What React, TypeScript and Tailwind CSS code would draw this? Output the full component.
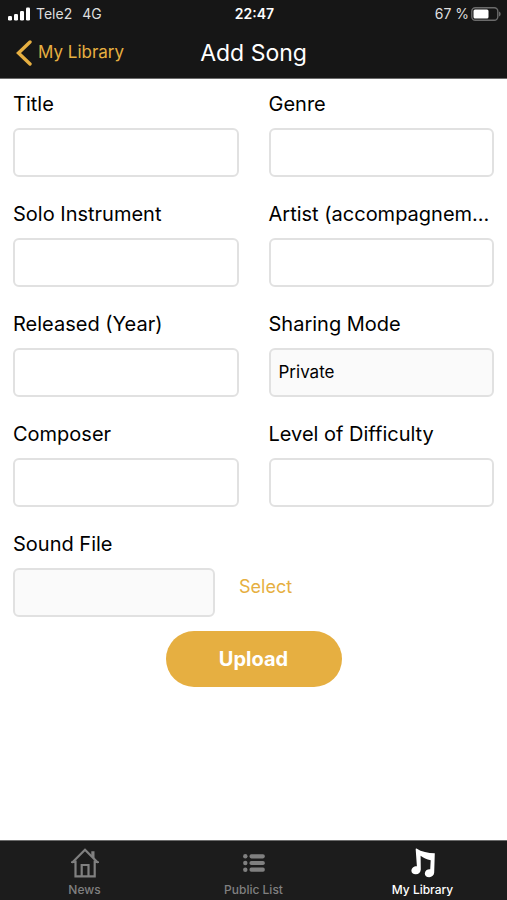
import { useState } from "react";
import { clsx } from "clsx";

type FieldProps = {
  id: string;
  label: string;
  value: string;
  onChange: (value: string) => void;
  options?: string[];
};

const controlClass =
  "block h-[49px] w-full appearance-none rounded-md border-2 border-[#e1e1e1] px-2 text-[17px] text-black focus:border-[#e6af41] focus:outline-none";

const Field = ({ id, label, value, onChange, options }: FieldProps) => {
  return (
    <div className="min-w-0">
      <label htmlFor={id} className="mb-2 block text-xl leading-[31px] whitespace-nowrap">
        {label}
      </label>
      {options ? (
        <select
          id={id}
          value={value}
          onChange={(e) => onChange(e.target.value)}
          className={clsx(controlClass, "bg-[#fafafa]")}
        >
          {options.map((option) => (
            <option key={option}>{option}</option>
          ))}
        </select>
      ) : (
        <input
          id={id}
          type="text"
          value={value}
          onChange={(e) => onChange(e.target.value)}
          className={clsx(controlClass, "bg-white")}
        />
      )}
    </div>
  );
};

const SignalIcon = () => (
  <svg width="22" height="14" viewBox="0 0 22 14" fill="#fff" aria-hidden="true">
    <rect x="0" y="9" width="4" height="4.5" rx="1.2" />
    <rect x="6" y="7" width="4" height="6.5" rx="1.2" />
    <rect x="12" y="4" width="4" height="9.5" rx="1.2" />
    <rect x="18" y="0.5" width="4" height="13" rx="1.2" />
  </svg>
);

const BatteryIcon = () => (
  <svg width="30" height="14" viewBox="0 0 30 14" aria-hidden="true">
    <rect x="0.8" y="0.8" width="26" height="12.4" rx="3.5" fill="none" stroke="#6b6b6b" strokeWidth="1.4" />
    <rect x="2.5" y="2.5" width="15" height="9" rx="1.5" fill="#fff" />
    <path d="M28 4.5c2.2.7 2.2 4.3 0 5z" fill="#6b6b6b" />
  </svg>
);

const BackIcon = () => (
  <svg
    width="16"
    height="26"
    viewBox="0 0 16 26"
    fill="none"
    stroke="#e6af41"
    strokeWidth="3.4"
    strokeLinecap="round"
    aria-hidden="true"
  >
    <path d="M14 2 2.5 13 14 24" />
  </svg>
);

const HomeIcon = () => (
  <svg width="28" height="30" viewBox="0 0 28 30" fill="none" stroke="currentColor" strokeWidth="2.2" aria-hidden="true">
    <path d="M1 14.8 14 1.8l13 13" />
    <path d="M0 14.3h5M23 14.3h5" strokeWidth="1.4" />
    <path d="M4.500 12.5V28.300h19.200V12.5" />
    <path d="M20.300 3.200h3.200v8.200l-3.200-3.200z" fill="currentColor" stroke="none" />
    <path d="M10.700 28V17h6.800v11" />
  </svg>
);

const ListIcon = () => (
  <svg width="22" height="30" viewBox="0 0 22 30" fill="currentColor" aria-hidden="true">
    {[8.3, 15, 21.7].map((y) => (
      <g key={y}>
        <circle cx="2.3" cy={y} r="2.2" />
        <rect x="6.5" y={y - 2.1} width="15.3" height="4.2" rx="1.8" />
      </g>
    ))}
  </svg>
);

const NoteIcon = () => (
  <svg width="26" height="30" viewBox="0 0 26 30" fill="currentColor" aria-hidden="true">
    <path d="M6.500 .6C11.500 4 18 5.200 24.800 5.300L24.200 24.600C24 27.400 22 29.200 19.200 29.200C16.500 29.200 14.800 27.700 14.800 25.500C14.900 22.500 17.500 21 20.200 21.200L20.700 12.200C16.600 11.500 13.500 10.200 10.600 7.800L10.800 21.500C10.600 24.500 8.700 26.200 5.900 26.300C3.200 26.400 1.400 25 1.400 22.800C1.400 20 4 18 6.900 18.200L5.700 1.500Q5.600 .2 6.500 .6Z" />
  </svg>
);

const tabs = [
  { label: "News", icon: HomeIcon },
  { label: "Public List", icon: ListIcon },
  { label: "My Library", icon: NoteIcon },
];

const initialSong = {
  title: "",
  genre: "",
  instrument: "",
  artist: "",
  year: "",
  sharing: "Private",
  composer: "",
  difficulty: "",
  file: "",
};

const fields: { name: keyof typeof initialSong; label: string; options?: string[] }[] = [
  { name: "title", label: "Title" },
  { name: "genre", label: "Genre" },
  { name: "instrument", label: "Solo Instrument" },
  { name: "artist", label: "Artist (accompagnem..." },
  { name: "year", label: "Released (Year)" },
  { name: "sharing", label: "Sharing Mode", options: ["Private"] },
  { name: "composer", label: "Composer" },
  { name: "difficulty", label: "Level of Difficulty" },
];

export default function App() {
  const [song, setSong] = useState(initialSong);
  const [activeTab, setActiveTab] = useState("My Library");

  return (
    <div className="flex min-h-screen flex-col bg-white font-[Inter,sans-serif] text-black">
      <header className="border-b border-[#6b6b6b] bg-[#161616] text-white">
        <div className="grid h-7 grid-cols-[1fr_auto_1fr] items-center pr-1.5 pl-2 text-sm text-[#dedede]">
          <div className="flex items-center gap-1.5">
            <SignalIcon />
            <span>Tele2</span>
            <span className="ml-1">4G</span>
          </div>
          <span className="font-semibold text-white">22:47</span>
          <div className="flex items-center justify-end gap-0.5">
            <span>67 %</span>
            <BatteryIcon />
          </div>
        </div>
        <div className="grid h-[50px] grid-cols-[1fr_auto_1fr] items-center px-4">
          <a href="#library" className="flex items-center gap-1.5 text-[17px] text-[#e6af41]">
            <BackIcon />
            My Library
          </a>
          <h1 className="text-[23px] leading-8">Add Song</h1>
        </div>
      </header>

      <main className="flex-1 px-[13px] pt-2.5">
        <form onSubmit={(e) => e.preventDefault()}>
          <div className="grid grid-cols-2 gap-x-[30px] gap-y-[22px]">
            {fields.map(({ name, label, options }) => (
              <Field
                key={name}
                id={name}
                label={label}
                options={options}
                value={song[name]}
                onChange={(value) => setSong({ ...song, [name]: value })}
              />
            ))}
          </div>

          <div className="mt-[22px]">
            <label htmlFor="file" className="mb-2 block text-xl leading-[31px]">
              Sound File
            </label>
            <div className="flex items-center gap-6">
              <div className="w-[42%]">
                <input id="file" type="text" readOnly value={song.file} className={clsx(controlClass, "bg-[#fafafa]")} />
              </div>
              <button type="button" className="mb-3 text-lg text-[#e6af41]">
                Select
              </button>
            </div>
          </div>

          <div className="mt-3.5 flex justify-center">
            <button type="submit" className="h-14 w-44 rounded-full bg-[#e6af41] text-xl font-bold text-white">
              Upload
            </button>
          </div>
        </form>
      </main>

      <nav className="grid h-[60px] grid-cols-3 border-t border-[#6b6b6b] bg-[#1c1c1c]">
        {tabs.map(({ label, icon: Icon }) => (
          <button
            key={label}
            type="button"
            onClick={() => setActiveTab(label)}
            className={clsx(
              "flex flex-col items-center gap-1 pt-[7px] text-xs font-medium",
              label === activeTab ? "text-white" : "text-[#808080]"
            )}
          >
            <Icon />
            {label}
          </button>
        ))}
      </nav>
    </div>
  );
}
